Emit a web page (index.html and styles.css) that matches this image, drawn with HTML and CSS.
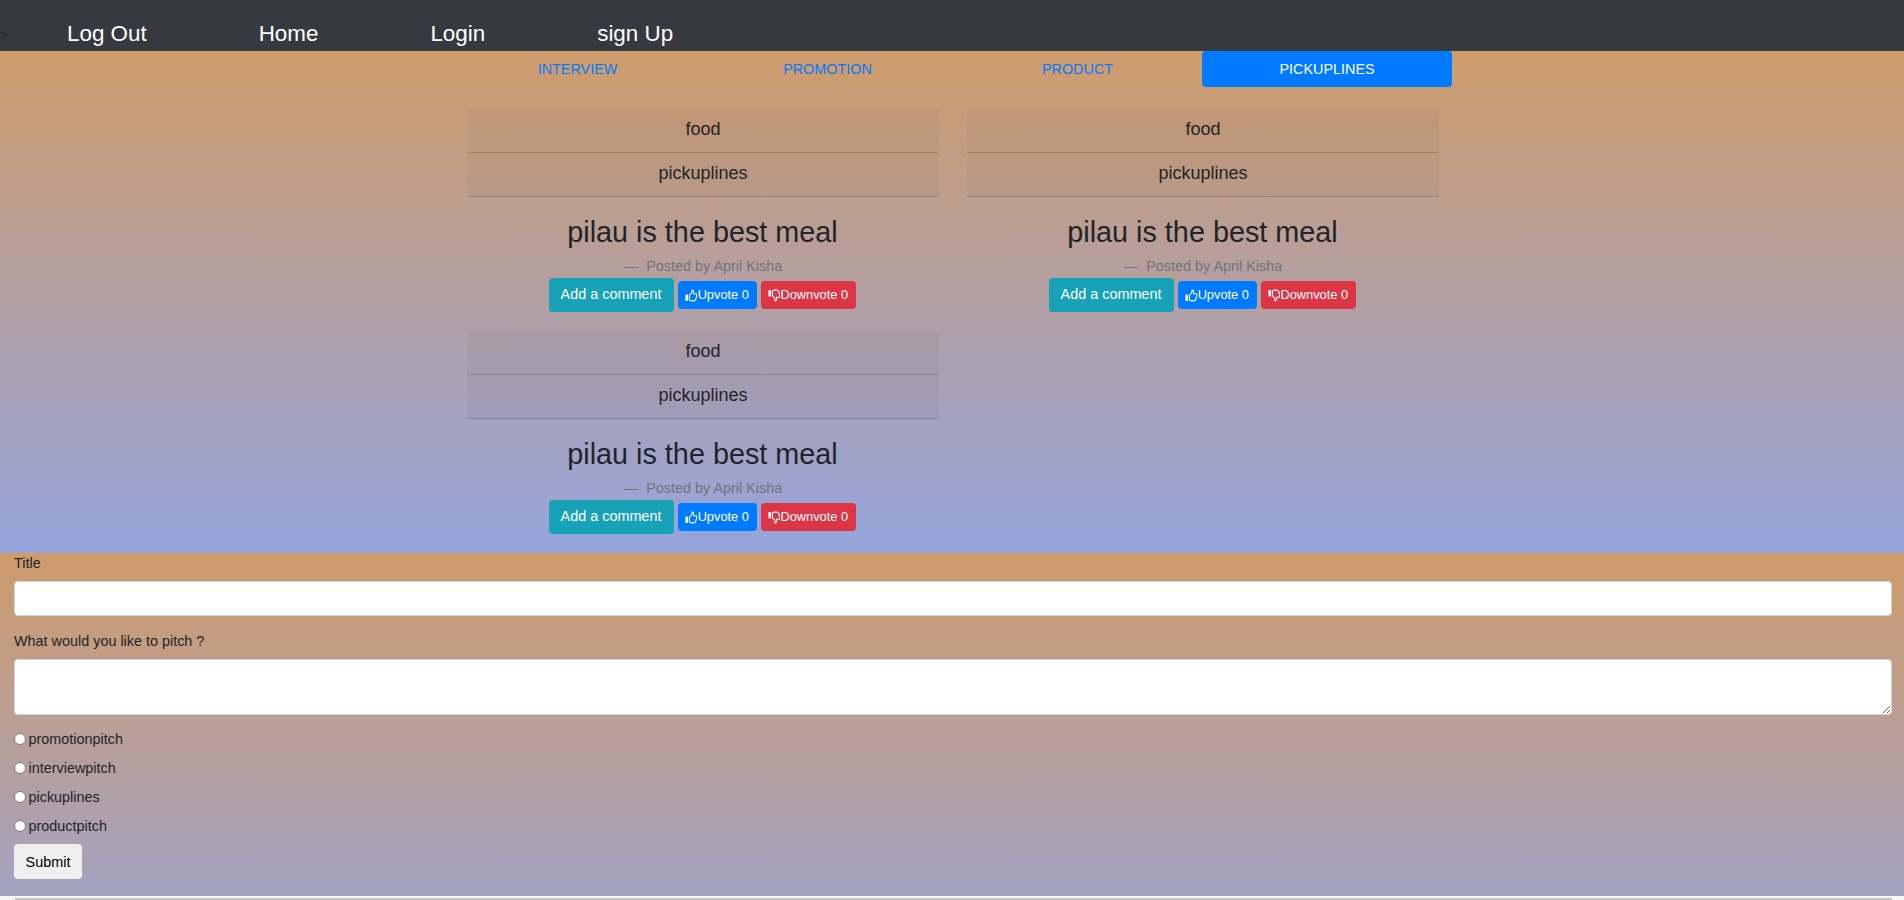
FILE: index.html
```html
<!DOCTYPE html>
<html lang="en">
<head>
<meta charset="utf-8">
<title>Pitches</title>
<link rel="stylesheet" href="styles.css">
</head>
<body>
<svg class="icon-defs" width="0" height="0" aria-hidden="true">
  <symbol id="thumb" viewBox="0 0 14 14">
    <rect x="0.5" y="6" width="3" height="7" fill="currentColor"/>
    <path d="M5 6.5 L7.5 4 L8 1 C9.5 1 10 2.5 9.5 5 L12.5 5 C13.5 5 13.5 6.5 13 7 C13.5 8 13 9 12.5 9.5 C12.7 10.5 12 11 11.7 11.5 C11.7 12.5 11 13 10 13 L7 13 L5 12 Z" fill="none" stroke="currentColor" stroke-width="1.2"/>
  </symbol>
</svg>
<nav class="navbar">
  <span class="toggler">&gt;</span>
  <a class="nav-link" href="#">Log Out</a>
  <a class="nav-link" href="#">Home</a>
  <a class="nav-link" href="#">Login</a>
  <a class="nav-link" href="#">sign Up</a>
</nav>
<section class="pitches">
  <ul class="tabs">
    <li class="tab">INTERVIEW</li>
    <li class="tab">PROMOTION</li>
    <li class="tab">PRODUCT</li>
    <li class="tab active">PICKUPLINES</li>
  </ul>
  <div class="cards">
    <article class="card">
      <div class="card-row">food</div>
      <div class="card-row">pickuplines</div>
      <div class="card-body">
        <h2 class="card-title">pilau is the best meal</h2>
        <p class="byline">—&nbsp; Posted by April Kisha</p>
        <div class="actions">
          <a class="btn btn-comment" href="#">Add a comment</a>
          <a class="btn btn-small btn-up" href="#"><svg class="thumb"><use href="#thumb"/></svg>Upvote 0</a>
          <a class="btn btn-small btn-down" href="#"><svg class="thumb flip"><use href="#thumb"/></svg>Downvote 0</a>
        </div>
      </div>
    </article>
    <article class="card">
      <div class="card-row">food</div>
      <div class="card-row">pickuplines</div>
      <div class="card-body">
        <h2 class="card-title">pilau is the best meal</h2>
        <p class="byline">—&nbsp; Posted by April Kisha</p>
        <div class="actions">
          <a class="btn btn-comment" href="#">Add a comment</a>
          <a class="btn btn-small btn-up" href="#"><svg class="thumb"><use href="#thumb"/></svg>Upvote 0</a>
          <a class="btn btn-small btn-down" href="#"><svg class="thumb flip"><use href="#thumb"/></svg>Downvote 0</a>
        </div>
      </div>
    </article>
    <article class="card">
      <div class="card-row">food</div>
      <div class="card-row">pickuplines</div>
      <div class="card-body">
        <h2 class="card-title">pilau is the best meal</h2>
        <p class="byline">—&nbsp; Posted by April Kisha</p>
        <div class="actions">
          <a class="btn btn-comment" href="#">Add a comment</a>
          <a class="btn btn-small btn-up" href="#"><svg class="thumb"><use href="#thumb"/></svg>Upvote 0</a>
          <a class="btn btn-small btn-down" href="#"><svg class="thumb flip"><use href="#thumb"/></svg>Downvote 0</a>
        </div>
      </div>
    </article>
  </div>
</section>
<form class="pitch-form">
  <label class="field-label" for="title">Title</label>
  <input class="control" id="title" type="text">
  <label class="field-label" for="pitch">What would you like to pitch ?</label>
  <textarea class="control area" id="pitch"></textarea>
  <label class="radio"><input type="radio" name="cat">promotionpitch</label>
  <label class="radio"><input type="radio" name="cat">interviewpitch</label>
  <label class="radio"><input type="radio" name="cat">pickuplines</label>
  <label class="radio"><input type="radio" name="cat">productpitch</label>
  <button class="submit" type="button">Submit</button>
</form>
<div class="below-form"><div class="next-field"></div></div>
</body>
</html>
```
FILE: styles.css
```css
* { box-sizing: border-box; }
html, body { margin: 0; padding: 0; }
body {
  height: 900px;
  overflow: hidden;
  font-family: "Liberation Sans", Arial, sans-serif;
  font-size: 16px;
  line-height: 1.5;
  color: #212529;
  background: #f6f6f6;
}
.icon-defs { position: absolute; }
.navbar {
  height: 51px;
  background: #343a40;
  position: relative;
  display: flex;
  align-items: flex-start;
  padding: 17px 0 0 67px;
  gap: 112px;
}
.toggler { position: absolute; left: 0; top: 27px; font-size: 14px; line-height: 16px; color: #212529; }
.nav-link { color: #fff; font-size: 22.4px; line-height: 34px; text-decoration: none; }
.pitches {
  height: 502px;
  background: linear-gradient(to bottom, #cf9b6b, #95a5dd);
}
.tabs {
  list-style: none;
  margin: 0 0 0 452px;
  padding: 0;
  width: 1000px;
  display: grid;
  grid-template-columns: repeat(4, 250px);
}
.tab {
  height: 36px;
  line-height: 36px;
  text-align: center;
  font-size: 14.4px;
  color: #007bff;
  border-radius: 4px;
  padding-left: 1px;
}
.tab.active { background: #007bff; color: #fff; padding-left: 0; }
.cards {
  margin: 21px 0 0 452px;
  width: 1000px;
  padding: 0 13px 0 15px;
  display: grid;
  grid-template-columns: 472px 472px;
  column-gap: 28px;
  row-gap: 18px;
  align-items: start;
}
.card-row {
  height: 44px;
  line-height: 41px;
  text-align: center;
  font-size: 18px;
  background: rgba(0,0,0,.03);
  border-bottom: 1px solid rgba(0,0,0,.15);
}
.card-row:first-child { height: 45px; line-height: 42px; border-radius: 4px 4px 0 0; }
.card-body { text-align: center; padding-top: 16px; }
.card-title { margin: 0; padding-right: 1px; font-size: 28.8px; font-weight: 400; line-height: 38px; }
.byline { margin: 5px 0 2px; font-size: 14.4px; line-height: 20px; color: #6c757d; }
.actions { display: flex; justify-content: center; align-items: center; gap: 4px; margin-right: 2px; }
.btn { color: #fff; text-decoration: none; border-radius: 4px; display: inline-flex; align-items: center; justify-content: center; }
.btn-comment { background: #17a2b8; font-size: 14.4px; width: 125px; height: 34px; }
.btn-small { font-size: 12.8px; height: 28px; }
.btn-up { background: #007bff; width: 79px; }
.btn-down { background: #dc3545; width: 95px; }
.thumb { width: 12.5px; height: 13px; flex: none; }
.flip { transform: scaleY(-1); }
.pitch-form {
  padding: 0 12px 17px 14px;
  background: linear-gradient(to bottom, #cf9b6b, #95a5dd);
  background-size: 100% 460px;
  background-repeat: no-repeat;
}
.field-label { display: block; font-size: 14.4px; line-height: 21px; }
.control {
  display: block;
  width: 100%;
  height: 35px;
  margin: 7px 0 15px;
  background: #fff;
  border: 1px solid #ced4da;
  border-radius: 4px;
}
.area { height: 56px; margin-bottom: 14px; }
.radio { display: flex; align-items: center; font-size: 14.4px; line-height: 21px; height: 21px; margin-bottom: 8px; }
.radio input { margin: 0 2.5px 0 0; width: 12px; height: 12px; position: relative; top: -1px; }
.submit {
  display: block;
  width: 68px;
  height: 35px;
  margin-top: -1px;
  font-family: inherit;
  font-size: 14.4px;
  color: #000;
  background: #efefef;
  border: 0;
  border-radius: 4px;
  padding: 0;
}
.below-form { padding: 2px 12px 0 15px; }
.next-field { height: 10px; background: #c4c4c4; }
```
